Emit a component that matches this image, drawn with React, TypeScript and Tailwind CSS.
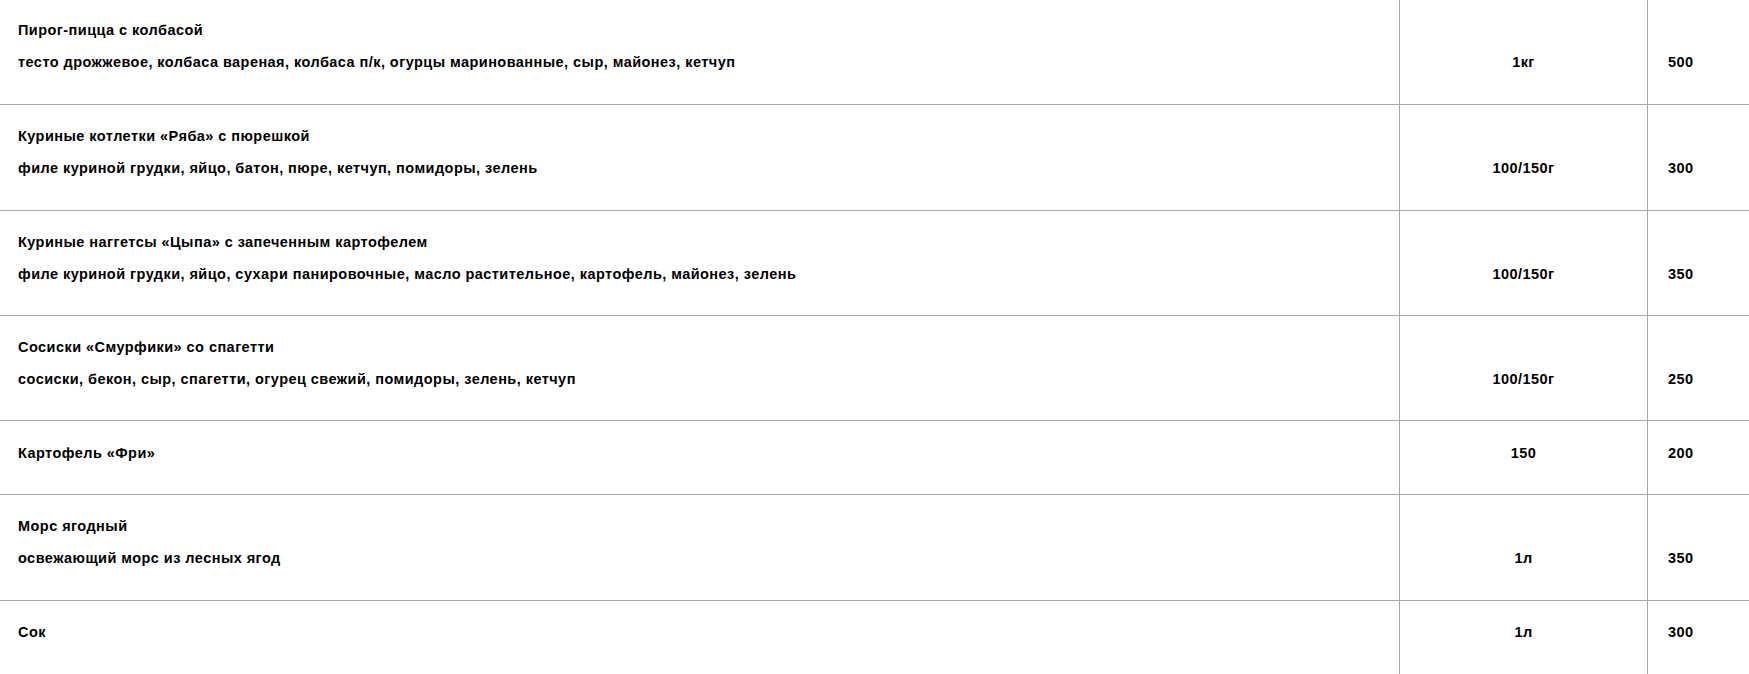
const items = [
    {
        title: 'Пирог-пицца с колбасой',
        desc: 'тесто дрожжевое, колбаса вареная, колбаса п/к, огурцы маринованные, сыр, майонез, кетчуп',
        weight: '1кг',
        price: '500',
        h: 'h-[105px]',
        pt: 'pt-[14px]',
    },
    {
        title: 'Куриные котлетки «Ряба» с пюрешкой',
        desc: 'филе куриной грудки, яйцо, батон, пюре, кетчуп, помидоры, зелень',
        weight: '100/150г',
        price: '300',
        h: 'h-[106px]',
        pt: 'pt-[15px]',
    },
    {
        title: 'Куриные наггетсы «Цыпа» с запеченным картофелем',
        desc: 'филе куриной грудки, яйцо, сухари панировочные, масло растительное, картофель, майонез, зелень',
        weight: '100/150г',
        price: '350',
        h: 'h-[105px]',
        pt: 'pt-[15px]',
    },
    {
        title: 'Сосиски «Смурфики» со спагетти',
        desc: 'сосиски, бекон, сыр, спагетти, огурец свежий, помидоры, зелень, кетчуп',
        weight: '100/150г',
        price: '250',
        h: 'h-[105px]',
        pt: 'pt-[15px]',
    },
    {
        title: 'Картофель «Фри»',
        desc: '',
        weight: '150',
        price: '200',
        h: 'h-[74px]',
        pt: 'pt-[16px]',
    },
    {
        title: 'Морс ягодный',
        desc: 'освежающий морс из лесных ягод',
        weight: '1л',
        price: '350',
        h: 'h-[106px]',
        pt: 'pt-[15px]',
    },
    {
        title: 'Сок',
        desc: '',
        weight: '1л',
        price: '300',
        h: 'h-[80px]',
        pt: 'pt-[15px]',
    },
];

export default function App() {
    return (
        <div className="w-[1749px] h-[674px] overflow-hidden bg-white text-black font-['Liberation_Sans',Arial,sans-serif] font-bold text-[14.5px] leading-[32px] tracking-[0.45px]">
            {items.map((item) => (
                <div key={item.title} className={`flex border-b border-[#a8a8a8] ${item.h}`}>
                    {/* Name + composition */}
                    <div className={`w-[1400px] shrink-0 border-r border-[#a8a8a8] pl-[18px] ${item.pt}`}>
                        <div>{item.title}</div>
                        {item.desc && <div>{item.desc}</div>}
                    </div>
                    {/* Weight */}
                    <div className={`w-[248px] shrink-0 border-r border-[#a8a8a8] text-center ${item.pt}`}>
                        {item.desc && <div>&nbsp;</div>}
                        <div>{item.weight}</div>
                    </div>
                    {/* Price */}
                    <div className={`flex-1 pl-[20px] ${item.pt}`}>
                        {item.desc && <div>&nbsp;</div>}
                        <div>{item.price}</div>
                    </div>
                </div>
            ))}
        </div>
    );
}
